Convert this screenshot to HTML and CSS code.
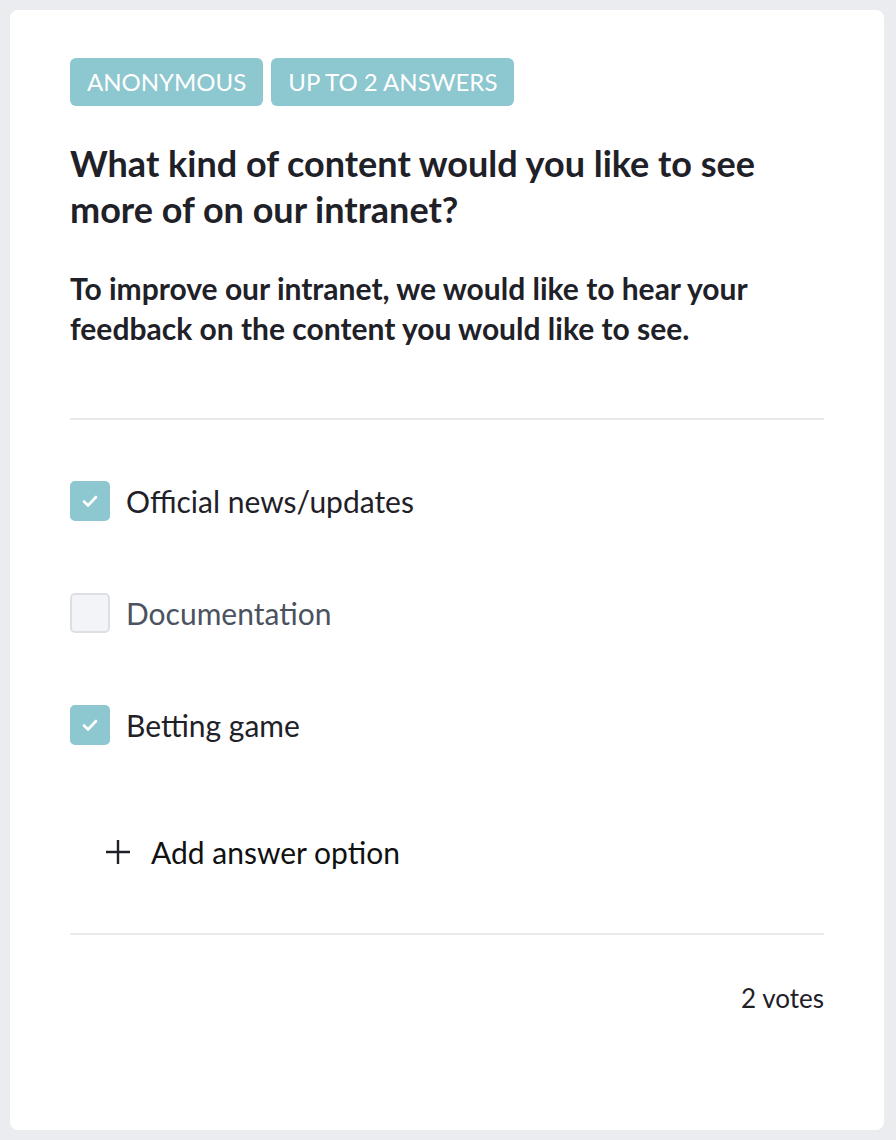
FILE: index.html
```html
<!DOCTYPE html>
<html>
<head>
    <title>Poll</title>
    <link rel="stylesheet" href="styles.css">
</head>
<body>
    <div class="poll-card">
        <div class="badges">
            <span class="badge">Anonymous</span>
            <span class="badge">Up to 2 answers</span>
        </div>
        <h1 class="poll-title">What kind of content would you like to see more of on our intranet?</h1>
        <p class="poll-desc">To improve our intranet, we would like to hear your feedback on the content you would like to see.</p>

        <div class="options">
            <label class="option checked">
                <span class="box">
                    <svg width="20" height="20" viewBox="0 0 20 20"><path d="M4 10.5l4 4L16 6" fill="none" stroke="#fff" stroke-width="2.6" stroke-linecap="round" stroke-linejoin="round"/></svg>
                </span>
                <span class="option-label">Official news/updates</span>
            </label>
            <label class="option">
                <span class="box"></span>
                <span class="option-label">Documentation</span>
            </label>
            <label class="option checked">
                <span class="box">
                    <svg width="20" height="20" viewBox="0 0 20 20"><path d="M4 10.5l4 4L16 6" fill="none" stroke="#fff" stroke-width="2.6" stroke-linecap="round" stroke-linejoin="round"/></svg>
                </span>
                <span class="option-label">Betting game</span>
            </label>
        </div>

        <div class="add-option">
            <svg width="26" height="26" viewBox="0 0 26 26"><path d="M13 1v24M1 13h24" stroke="#1f2128" stroke-width="2.4"/></svg>
            <span>Add answer option</span>
        </div>

        <div class="poll-footer">2 votes</div>
    </div>
</body>
</html>
```

FILE: styles.css
```css
* {
    box-sizing: border-box;
    margin: 0;
    padding: 0;
}

body {
    background: #ebecf0;
    padding: 10px 12px 10px 10px;
    font-family: 'Lato', 'Noto Sans', sans-serif;
    color: #1f2128;
}

.poll-card {
    background: #fff;
    border-radius: 8px;
    padding: 48px 60px 60px 60px;
    height: 1120px;
}

.badges {
    display: flex;
    gap: 8px;
}

.badge {
    background: #8dc7cf;
    color: #fff;
    text-transform: uppercase;
    font-size: 24px;
    line-height: 48px;
    height: 48px;
    padding: 0 17px;
    border-radius: 6px;
}

.poll-title {
    font-size: 36px;
    font-weight: 700;
    line-height: 46px;
    margin-top: 34px;
}

.poll-desc {
    font-size: 30px;
    font-weight: 700;
    line-height: 40px;
    margin-top: 36px;
    padding-bottom: 70px;
    border-bottom: 2px solid #e8e9ec;
}

.options {
    display: flex;
    flex-direction: column;
    gap: 72px;
    margin-top: 61px;
}

.option {
    display: flex;
    align-items: center;
    gap: 16px;
    height: 40px;
}

.box {
    width: 40px;
    height: 40px;
    border-radius: 5px;
    background: #f3f4f8;
    border: 2px solid #dddfe4;
    display: flex;
    align-items: center;
    justify-content: center;
}

.option.checked .box {
    background: #8dc7cf;
    border-color: #8dc7cf;
}

.option-label {
    font-size: 30px;
    color: #4b5260;
}

.option.checked .option-label {
    color: #1f2128;
}

.add-option {
    display: flex;
    align-items: center;
    gap: 20px;
    margin-top: 89px;
    padding-left: 35px;
    font-size: 30px;
    color: #111;
    padding-bottom: 63px;
    border-bottom: 2px solid #e8e9ec;
}

.poll-footer {
    text-align: right;
    font-size: 26px;
    margin-top: 47px;
}
```
